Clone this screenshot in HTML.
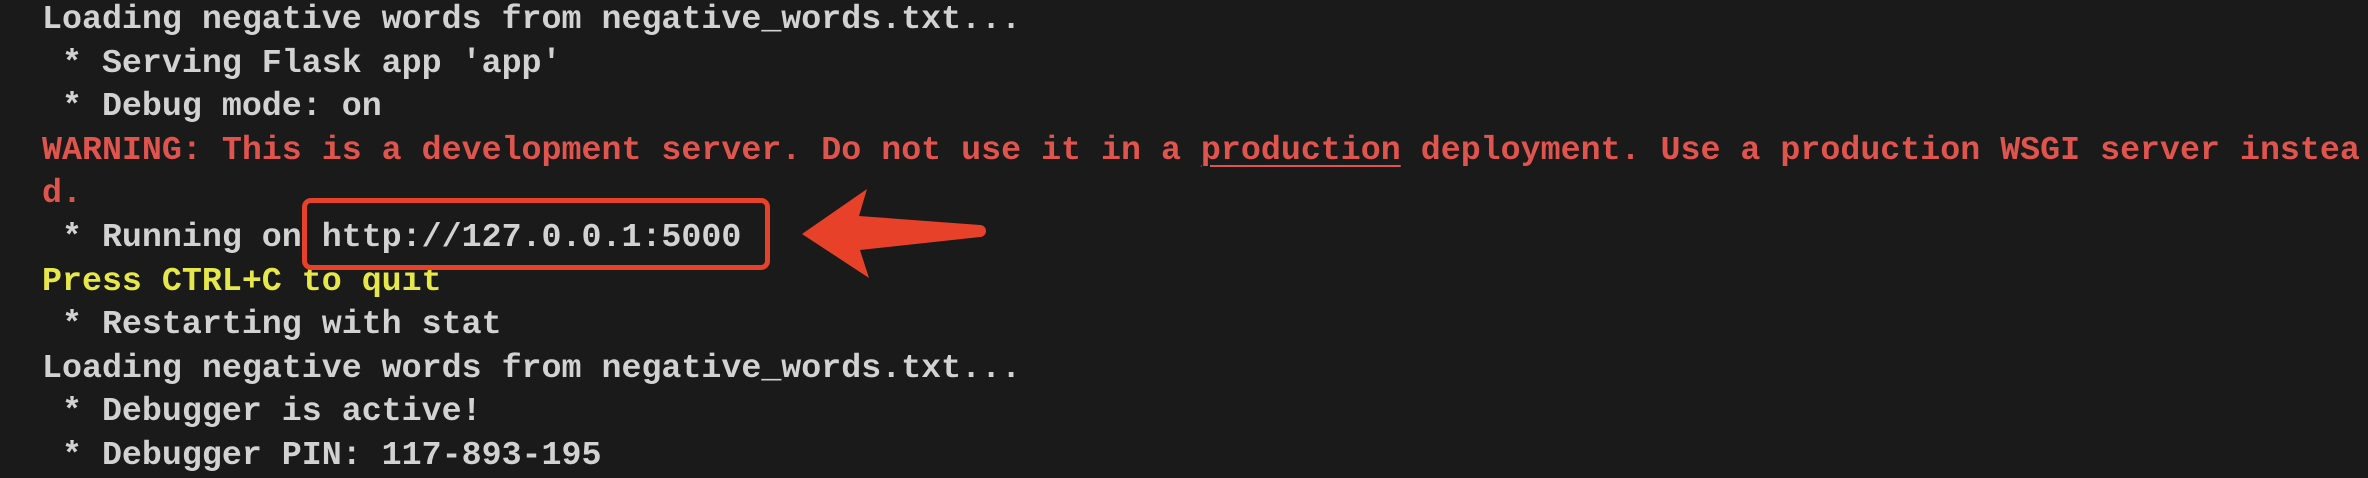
<!DOCTYPE html>
<html><head><meta charset="utf-8"><style>
html,body{margin:0;padding:0;}
body{width:2368px;height:478px;background:#1a1a1a;overflow:hidden;position:relative;}
.t{position:absolute;left:42px;top:-2px;font-family:"Liberation Mono",monospace;font-size:33.3px;line-height:43.6px;color:#d2d2d2;white-space:pre;font-weight:bold;letter-spacing:0;}
.r{color:#e0544e}
.y{color:#e6e84a}
u{text-decoration-thickness:2px;text-underline-offset:6px;}
.box{position:absolute;left:302px;top:198px;width:458px;height:62px;border:5px solid #e8412a;border-radius:9px;}
</style></head><body>
<div class="t">Loading negative words from negative_words.txt...
 * Serving Flask app 'app'
 * Debug mode: on
<span class="r">WARNING: This is a development server. Do not use it in a <u>production</u> deployment. Use a production WSGI server instea
d.</span>
 * Running on http://127.0.0.1:5000
<span class="y">Press CTRL+C to quit</span>
 * Restarting with stat
Loading negative words from negative_words.txt...
 * Debugger is active!
 * Debugger PIN: 117-893-195</div>
<div class="box"></div>
<svg style="position:absolute;left:0;top:0" width="2368" height="478">
<path d="M802,234 L867,189 L859,216 L980,225 A6,6 0 0 1 980,237 L860,250 L869,278 Z" fill="#e8412a"/>
</svg>
</body></html>
